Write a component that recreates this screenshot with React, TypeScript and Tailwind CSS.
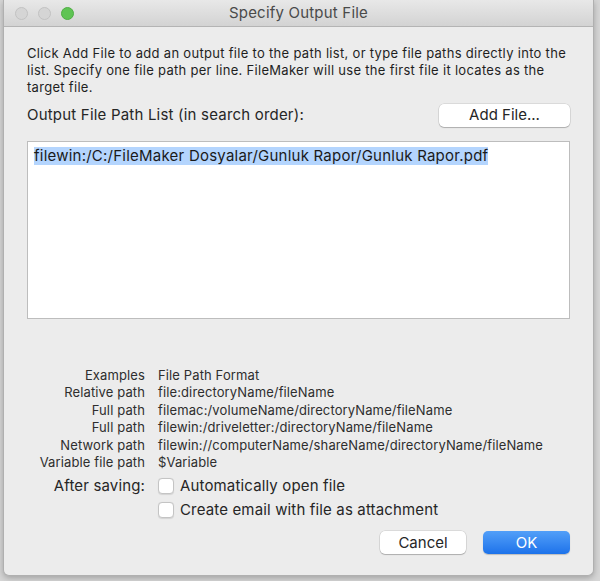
import React from 'react';

const font = { fontFamily: 'Inter, "Liberation Sans", Arial, sans-serif' };

const examples = [
  { label: 'Relative path', value: 'file:directoryName/fileName' },
  { label: 'Full path', value: 'filemac:/volumeName/directoryName/fileName' },
  { label: 'Full path', value: 'filewin:/driveletter:/directoryName/fileName' },
  { label: 'Network path', value: 'filewin://computerName/shareName/directoryName/fileName' },
  { label: 'Variable file path', value: '$Variable' },
];

function Light({ color }: { color: string }) {
  return <span className={`w-[13px] h-[13px] rounded-full border ${color}`} />;
}

function Check({ label }: { label: string }) {
  return (
    <label className="flex items-center gap-[6px] h-[24px]">
      <span className="w-[16px] h-[16px] rounded-[4px] bg-white border border-[#c4c4c4] shadow-[0_0.5px_1px_rgba(0,0,0,0.1)]" />
      <span className="text-[15px] tracking-[0.15px] text-[#262626]">{label}</span>
    </label>
  );
}

export default function App() {
  return (
    <div className="w-[600px] h-[581px] bg-[#d6d6d6] pl-[3px] pr-[6px] pb-[5px] overflow-hidden" style={font}>
      {/* Dialog window */}
      <div className="h-full flex flex-col bg-[#ececec] border border-[#b0b0b0] border-t-0 rounded-b-[6px] shadow-[0_2px_6px_rgba(0,0,0,0.25)]">
        {/* Title bar */}
        <div className="relative h-[27px] shrink-0 flex items-center bg-gradient-to-b from-[#e8e8e8] to-[#d3d3d3] border-b border-[#b4b4b4]">
          <div className="flex items-center gap-[10px] pl-[11px]">
            <Light color="bg-[#d5d5d5] border-[#c2c2c2]" />
            <Light color="bg-[#d5d5d5] border-[#c2c2c2]" />
            <Light color="bg-[#5fc454] border-[#4fae44]" />
          </div>
          <div className="absolute inset-0 flex items-center justify-center text-[15px] tracking-[0.2px] text-[#4a4a4a]">Specify Output File</div>
        </div>

        {/* Body */}
        <div className="flex-1 flex flex-col px-[23px] pt-[18px]">
          <p className="text-[13px] leading-[17px] tracking-[0.3px] text-[#1f1f1f]">
            Click Add File to add an output file to the path list, or type file paths directly into the list. Specify one file path per line. FileMaker will use the first file it locates as the target file.
          </p>

          <div className="flex items-center justify-between mt-[8px]">
            <span className="text-[15px] tracking-[0.2px] text-[#262626]">Output File Path List (in search order):</span>
            <button className="w-[131px] h-[23px] rounded-[5px] bg-white text-[15px] text-[#262626] shadow-[0_0_0_0.5px_rgba(0,0,0,0.15),0_1px_1px_rgba(0,0,0,0.2)]">Add File...</button>
          </div>

          <div className="mt-[14px] h-[178px] bg-white border border-[#bdbdbd] px-[6px] pt-[1px]">
            <span className="inline-block bg-[#b4d5fe] text-[15px] leading-[18px] tracking-[0.23px] text-[#1a1a1a]">filewin:/C:/FileMaker Dosyalar/Gunluk Rapor/Gunluk Rapor.pdf</span>
          </div>

          {/* Examples */}
          <div className="mt-[48px] grid grid-cols-[118px_1fr] gap-x-[13px] text-[13px] leading-[17.4px] tracking-[0.12px] text-[#2e2e2e]">
            <span className="text-right">Examples</span>
            <span>File Path Format</span>
            {examples.map((e, i) => (
              <React.Fragment key={i}>
                <span className="text-right">{e.label}</span>
                <span>{e.value}</span>
              </React.Fragment>
            ))}
          </div>

          <div className="mt-[3px] grid grid-cols-[118px_1fr] gap-x-[13px]">
            <span className="text-right text-[15px] tracking-[0.15px] text-[#262626] leading-[24px]">After saving:</span>
            <div className="flex flex-col">
              <Check label="Automatically open file" />
              <Check label="Create email with file as attachment" />
            </div>
          </div>

          <div className="mt-[9px] flex justify-end gap-[17px]">
            <button className="w-[86px] h-[23px] rounded-[5px] bg-white text-[15px] text-[#262626] shadow-[0_0_0_0.5px_rgba(0,0,0,0.15),0_1px_1px_rgba(0,0,0,0.2)]">Cancel</button>
            <button className="w-[87px] h-[23px] rounded-[5px] bg-gradient-to-b from-[#529ff8] to-[#1c72ea] text-[15px] text-white shadow-[0_1px_1px_rgba(0,0,0,0.2)]">OK</button>
          </div>
        </div>
      </div>
    </div>
  );
}
